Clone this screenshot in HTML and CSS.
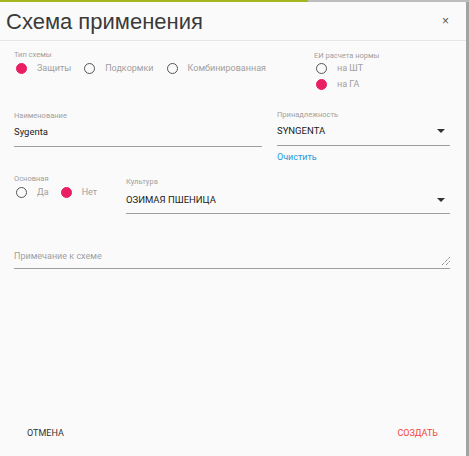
FILE: index.html
```html
<!DOCTYPE html>
<html lang="ru">
<head>
    <meta charset="UTF-8">
    <meta name="viewport" content="width=device-width, initial-scale=1.0">
    <title>Схема применения</title>
    <link rel="stylesheet" href="styles.css">
</head>
<body>
    <div class="backdrop-strip"></div>

    <div class="dialog">
        <!-- Header -->
        <div class="dialog-header">
            <h1>Схема применения</h1>
            <button class="close-btn">&times;</button>
        </div>

        <div class="dialog-body">
            <!-- Scheme type + unit -->
            <div class="row row-type">
                <div class="col-left">
                    <div class="field-label">Тип схемы</div>
                    <div class="radio-group">
                        <label class="radio"><span class="radio-dot on"></span>Защиты</label>
                        <label class="radio"><span class="radio-dot"></span>Подкормки</label>
                        <label class="radio"><span class="radio-dot"></span>Комбинированная</label>
                    </div>
                </div>
                <div class="col-right">
                    <div class="field-label">ЕИ расчета нормы</div>
                    <div class="radio-stack">
                        <label class="radio"><span class="radio-dot"></span>на ШТ</label>
                        <label class="radio"><span class="radio-dot on"></span>на ГА</label>
                    </div>
                </div>
            </div>

            <!-- Name + owner -->
            <div class="row row-name">
                <div class="col-left">
                    <div class="field">
                        <div class="field-label">Наименование</div>
                        <div class="field-value">Sygenta</div>
                    </div>
                </div>
                <div class="col-right">
                    <div class="field">
                        <div class="field-label">Принадлежность</div>
                        <div class="field-value select">SYNGENTA<span class="caret"></span></div>
                    </div>
                    <a class="clear-link" href="#">Очистить</a>
                </div>
            </div>

            <!-- Main + culture -->
            <div class="row row-main">
                <div class="col-main">
                    <div class="field-label">Основная</div>
                    <div class="radio-group">
                        <label class="radio"><span class="radio-dot"></span>Да</label>
                        <label class="radio"><span class="radio-dot on"></span>Нет</label>
                    </div>
                </div>
                <div class="col-culture">
                    <div class="field">
                        <div class="field-label">Культура</div>
                        <div class="field-value select">ОЗИМАЯ ПШЕНИЦА<span class="caret"></span></div>
                    </div>
                </div>
            </div>

            <!-- Note -->
            <div class="note">
                <span class="placeholder">Примечание к схеме</span>
                <svg class="resize" width="9" height="9" viewBox="0 0 9 9">
                    <line x1="1" y1="9" x2="9" y2="1" stroke="#555" stroke-width="1" stroke-dasharray="1 1"/>
                    <line x1="5" y1="9" x2="9" y2="5" stroke="#555" stroke-width="1" stroke-dasharray="1 1"/>
                </svg>
            </div>
        </div>

        <!-- Footer -->
        <div class="dialog-footer">
            <button class="btn">ОТМЕНА</button>
            <button class="btn btn-primary">СОЗДАТЬ</button>
        </div>
    </div>
</body>
</html>
```

FILE: styles.css
```css
body {
    margin: 0;
    font-family: Roboto, "Open Sans", Arial, sans-serif;
    background-color: #a3a3a3;
    color: #222;
    width: 469px;
    height: 456px;
    overflow: hidden;
}

.backdrop-strip {
    height: 2px;
    background: linear-gradient(to right, #a6b61f 0, #a6b61f 308px, #bdbdbd 308px);
}

/* Dialog */
.dialog {
    width: 466px;
    height: 454px;
    background-color: #fafafa;
    display: flex;
    flex-direction: column;
}

.dialog-header {
    height: 38px;
    border-bottom: 1px solid #e6e6e6;
    display: flex;
    align-items: center;
    justify-content: space-between;
    padding: 0 17px 0 6px;
}

.dialog-header h1 {
    font-family: "Liberation Sans", Arial, sans-serif;
    font-weight: normal;
    font-size: 22px;
    color: #3a3a3a;
    margin: 0;
    padding-top: 1px;
}

.close-btn {
    background: none;
    border: none;
    padding: 0;
    font-size: 12px;
    color: #555;
    cursor: pointer;
    font-family: Arial, sans-serif;
}

.dialog-body {
    flex: 1;
    padding: 0 16px 0 14px;
}

.row {
    display: flex;
    gap: 15px;
}

.col-left {
    width: 248px;
}

.col-right {
    flex: 1;
}

.field-label {
    font-size: 7.5px;
    color: #a0a0a0;
    line-height: 10px;
}

.radio-group {
    display: flex;
    align-items: center;
    gap: 13px;
    padding-left: 2px;
}

.radio-stack {
    display: flex;
    flex-direction: column;
    gap: 4px;
    padding-left: 2px;
}

.radio {
    display: inline-flex;
    align-items: center;
    gap: 10px;
    font-size: 9px;
    color: #a0a0a0;
    line-height: 12px;
}

.radio-dot {
    width: 11px;
    height: 11px;
    border-radius: 50%;
    box-sizing: border-box;
    border: 1.5px solid #555;
}

.radio-dot.on {
    background-color: #e91e63;
    border-color: #e91e63;
}

/* Scheme type row */
.row-type {
    margin-top: 9px;
}

.row-type .radio-group {
    margin-top: 2px;
}

.row-type .col-right {
    padding-left: 37px;
}

.row-type .col-right .field-label {
    margin-top: 1px;
}

.row-type .radio-stack {
    margin-top: 1px;
}

/* Name row */
.row-name {
    margin-top: 19px;
}

.row-name .col-left .field {
    margin-top: 2px;
}

.row-name .col-right .field {
    margin-top: 1px;
}

.field-value {
    font-size: 9.5px;
    line-height: 14px;
    color: #222;
    padding: 4px 0 7px;
    border-bottom: 1px solid #9e9e9e;
}

.select {
    display: flex;
    align-items: center;
    justify-content: space-between;
    padding-right: 5px;
}

.caret {
    width: 0;
    height: 0;
    border-left: 4px solid transparent;
    border-right: 4px solid transparent;
    border-top: 4px solid #333;
}

.clear-link {
    display: block;
    margin-top: 5px;
    font-size: 9px;
    line-height: 12px;
    color: #1e9be0;
    text-decoration: none;
}

/* Main + culture row */
.row-main {
    margin-top: 10px;
}

.col-main {
    width: 97px;
}

.col-main .field-label {
    margin-top: 1px;
}

.col-main .radio-group {
    margin-top: 2px;
    gap: 12px;
}

.col-culture {
    flex: 1;
    padding-top: 4px;
}

.col-culture .field-value {
    padding: 6px 5px 6px 0;
}

/* Note */
.note {
    margin-top: 35px;
    display: flex;
    justify-content: space-between;
    align-items: flex-end;
    border-bottom: 1px solid #9e9e9e;
    padding: 0 0 3px;
}

.placeholder {
    font-size: 9px;
    line-height: 14px;
    color: #a0a0a0;
    padding-bottom: 2px;
}

.resize {
    display: block;
}

/* Footer */
.dialog-footer {
    display: flex;
    justify-content: space-between;
    padding: 0 22px 11px 21px;
}

.btn {
    background: none;
    border: none;
    padding: 6px;
    font-family: Roboto, "Open Sans", Arial, sans-serif;
    font-size: 9px;
    line-height: 12px;
    color: #333;
    cursor: pointer;
}

.btn-primary {
    color: #f44336;
}
```
